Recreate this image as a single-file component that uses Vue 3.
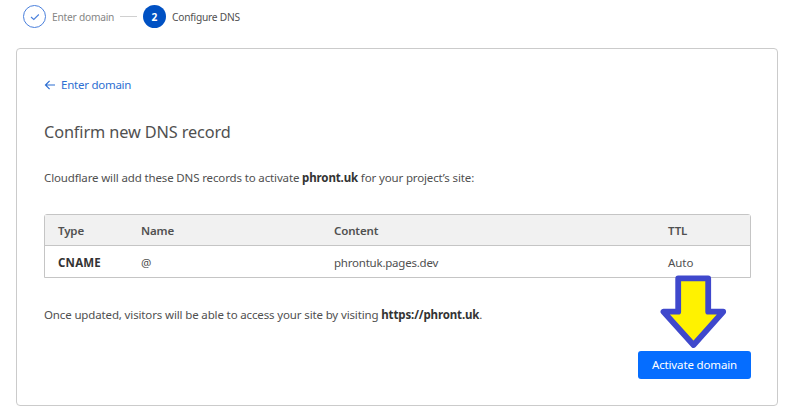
<template>
  <div class="page">
    <div class="stepper">
      <span class="step-badge done">
        <svg width="10" height="8" viewBox="0 0 10 8">
          <path d="M1 4 L3.8 6.5 L8.8 1.5" />
        </svg>
      </span>
      <span class="step-label muted">Enter domain</span>
      <span class="step-line"></span>
      <span class="step-badge active">2</span>
      <span class="step-label">Configure DNS</span>
    </div>

    <div class="card">
      <a class="back-link">
        <svg width="11" height="10" viewBox="0 0 11 10">
          <path d="M11 5 H1.8 M5.6 0.9 L1.5 5 L5.6 9.1" />
        </svg>
        <span>Enter domain</span>
      </a>

      <h1>Confirm new DNS record</h1>

      <p class="intro">
        Cloudflare will add these DNS records to activate <strong>{{ domain }}</strong> for your project’s site:
      </p>

      <div class="table">
        <div class="row head">
          <span v-for="col in columns" :key="col">{{ col }}</span>
        </div>
        <div v-for="record in records" :key="record.name" class="row">
          <span class="type">{{ record.type }}</span>
          <span>{{ record.name }}</span>
          <span class="target">{{ record.content }}</span>
          <span class="ttl">{{ record.ttl }}</span>
        </div>
      </div>

      <p class="outro">
        Once updated, visitors will be able to access your site by visiting <strong>https://{{ domain }}</strong>.
      </p>

      <div class="actions">
        <button class="btn-primary">Activate domain</button>
        <!-- pointer above the button -->
        <svg class="pointer" width="70" height="76" viewBox="0 0 70 76">
          <path d="M20.2 5.4 H50.2 V38.7 H65.2 L35.5 72 L5.5 38.7 H20.2 Z" />
        </svg>
      </div>
    </div>
  </div>
</template>

<script setup>
const domain = 'phront.uk';

const columns = ['Type', 'Name', 'Content', 'TTL'];

const records = [
  { type: 'CNAME', name: '@', content: 'phrontuk.pages.dev', ttl: 'Auto' }
];
</script>

<style>
body {
  background: #fff;
}
</style>

<style scoped>
.page {
  box-sizing: border-box;
  width: 800px;
  height: 412px;
  padding: 5px 0 0 16px;
  overflow: hidden;
  background: #fff;
  color: #505050;
  font-family: "Noto Sans", "Open Sans", sans-serif;
  font-size: 11.5px;
  letter-spacing: -0.14px;
  white-space: nowrap;
}

.stepper {
  display: flex;
  align-items: center;
  height: 23px;
  padding-left: 7px;
  font-size: 10.2px;
  letter-spacing: -0.22px;
}

.step-badge {
  display: flex;
  flex-shrink: 0;
  align-items: center;
  justify-content: center;
  box-sizing: border-box;
  width: 23px;
  height: 23px;
  border-radius: 50%;
}

.step-badge.done {
  border: 1px solid #4a80dc;
}

.step-badge.done path {
  fill: none;
  stroke: #4a80dc;
  stroke-width: 1.1;
}

.step-badge.active {
  background: #0051c3;
  color: #fff;
  font-weight: 700;
  letter-spacing: 0;
}

.step-label {
  width: 68px;
  margin: 1px 0 0 6px;
}

.step-label.muted {
  width: 61px;
  color: #858585;
}

.step-line {
  width: 17px;
  height: 1px;
  margin: 0 6px 0 7px;
  background: #d0d0d0;
}

.card {
  box-sizing: border-box;
  width: 762px;
  height: 358px;
  margin-top: 20px;
  padding: 27px 27px 0;
  border: 1px solid #cbcbcb;
  border-radius: 4px;
}

.back-link {
  display: flex;
  align-items: center;
  gap: 6px;
  height: 18px;
  color: #2d6fd2;
  letter-spacing: -0.25px;
}

.back-link span {
  padding-bottom: 2px;
}

.back-link path {
  fill: none;
  stroke: #2d6fd2;
  stroke-width: 1.2;
}

h1 {
  margin: 26px 0 0;
  font-size: 16.3px;
  font-weight: 400;
  line-height: 24px;
  letter-spacing: -0.12px;
}

p {
  margin: 0;
  line-height: 18px;
}

strong {
  color: #333;
}

.intro {
  margin-top: 25px;
}

.table {
  box-sizing: border-box;
  width: 707px;
  height: 64px;
  margin-top: 27px;
  border: 1px solid #c5c5c5;
  border-radius: 3px 3px 0 0;
}

.row {
  display: grid;
  grid-template-columns: 83px 193px 334px 1fr;
  align-items: center;
  box-sizing: border-box;
  height: 31px;
  padding: 2px 0 0 13px;
}

.row.head {
  padding-top: 0;
  border-bottom: 1px solid #c5c5c5;
  background: #f1f1f1;
  font-weight: 600;
}

.type {
  color: #333;
  font-weight: 700;
  letter-spacing: 0.2px;
}

.target {
  letter-spacing: -0.22px;
}

.ttl {
  letter-spacing: -0.05px;
}

.outro {
  margin-top: 28px;
}

.actions {
  position: relative;
  display: flex;
  justify-content: flex-end;
  width: 707px;
  margin-top: 27px;
}

.btn-primary {
  width: 113px;
  height: 28px;
  padding: 0 0 1px;
  border: 0;
  border-radius: 3px;
  background: #056dff;
  color: #fff;
  font: inherit;
  letter-spacing: inherit;
}

.pointer {
  position: absolute;
  top: -78px;
  left: 614px;
}

.pointer path {
  fill: #fff200;
  stroke: #3f48cc;
  stroke-width: 5.8;
  stroke-linejoin: round;
}
</style>
